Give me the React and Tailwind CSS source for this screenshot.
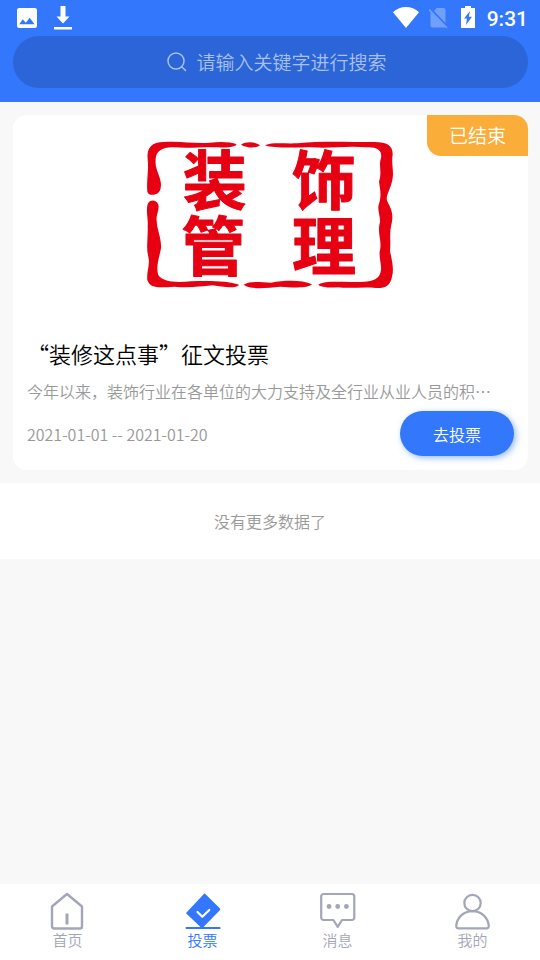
import React, { useState } from "react";

const polls = [
  {
    id: 1,
    title: "“装修这点事”征文投票",
    summary: "今年以来，装饰行业在各单位的大力支持及全行业从业人员的积…",
    start: "2021-01-01",
    end: "2021-01-20",
    status: "已结束",
  },
];

const tabs = [
  { key: "home", label: "首页", Icon: HomeIcon },
  { key: "vote", label: "投票", Icon: VoteIcon },
  { key: "message", label: "消息", Icon: MessageIcon },
  { key: "mine", label: "我的", Icon: UserIcon },
];

function HomeIcon() {
  return (
    <svg width="36" height="38" viewBox="0 0 36 38" fill="none" stroke="currentColor">
      <path
        d="M2 14.500 17 2l15 12.500V34.500a2 2 0 0 1-2 2H4a2 2 0 0 1-2-2Z"
        strokeWidth="2.400"
        strokeLinejoin="round"
      />
      <path d="M17 21.500v11" strokeWidth="3" />
    </svg>
  );
}

function VoteIcon() {
  return (
    <svg width="36" height="38" viewBox="0 0 36 38" fill="none">
      <path
        d="M19.800 1.600 35 16.500a1 1 0 0 1 0 1.400L18.500 35h-3L1.500 21.800a1 1 0 0 1 0-1.400L19.100 1.700a.5.5 0 0 1 .7-.1Z"
        fill="currentColor"
      />
      <path d="M1.500 36h33" stroke="currentColor" strokeWidth="2.200" strokeLinecap="round" />
      <path
        d="m12.500 20 4.800 4.800 7-6.800"
        stroke="white"
        strokeWidth="2.200"
        strokeLinecap="round"
        strokeLinejoin="round"
      />
    </svg>
  );
}

function MessageIcon() {
  return (
    <svg width="36" height="38" viewBox="0 0 36 38" fill="none">
      <path
        d="M3.500 2h28.500a2.300 2.300 0 0 1 2.300 2.300v21.400a2.300 2.300 0 0 1-2.300 2.300H22l-4.300 6.800-4.300-6.800H3.500a2.300 2.300 0 0 1-2.300-2.300V4.300A2.300 2.300 0 0 1 3.500 2Z"
        stroke="currentColor"
        strokeWidth="2.200"
        strokeLinejoin="round"
      />
      <g fill="currentColor">
        <circle cx="9" cy="14.500" r="2.400" />
        <circle cx="17.700" cy="14.500" r="2.400" />
        <circle cx="26.400" cy="14.500" r="2.400" />
      </g>
    </svg>
  );
}

function UserIcon() {
  return (
    <svg width="36" height="38" viewBox="0 0 36 38" fill="none" stroke="currentColor" strokeWidth="2.200">
      <circle cx="17.500" cy="11" r="8.200" />
      <path
        d="M17.500 19.200c9 0 15.500 6.300 16.300 14.800a2.200 2.200 0 0 1-2.200 2.300H3.400A2.200 2.200 0 0 1 1.200 34C2 25.500 8.500 19.200 17.500 19.200Z"
        strokeLinejoin="round"
      />
    </svg>
  );
}

function StatusBar() {
  return (
    <div className="flex h-9 items-center justify-between pr-3 pl-4 text-white">
      <div className="flex items-center gap-4">
        <svg width="22" height="24" viewBox="0 0 22 24">
          <path
            d="M3.200 2h15.600a2.200 2.200 0 0 1 2.200 2.200v15.600a2.200 2.200 0 0 1-2.200 2.200H3.200A2.200 2.200 0 0 1 1 19.800V4.200A2.200 2.200 0 0 1 3.200 2Zm3.500 11.200L3.300 18.300h15.200l-4.800-6.600-3.900 5Z"
            fill="currentColor"
            fillRule="evenodd"
          />
        </svg>
        <svg width="18" height="24" viewBox="0 0 18 24" fill="currentColor">
          <path d="M6.500 0h5v10.500h4L9 17.500l-6.500-7h4ZM0 21h18v2.500H0Z" />
        </svg>
      </div>
      <div className="flex items-center">
        <svg className="mr-2" width="28" height="24" viewBox="0 0 28 24" fill="currentColor">
          <path d="M0 6.300C7-.8 19-.8 26 6.300L13 22Z" />
        </svg>
        <svg className="mr-3" width="20" height="24" viewBox="0 0 20 24" fill="none">
          <g opacity=".3">
            <path d="M7.500 2H14.500a2 2 0 0 1 2 2v13L5 5ZM1.500 6l15 15a2 2 0 0 1-1.500.5H3.500a2 2 0 0 1-2-2Z" fill="currentColor" />
            <path d="M0 3.500 18 22" stroke="currentColor" strokeWidth="1.600" />
          </g>
        </svg>
        <svg className="mr-3" width="14" height="24" viewBox="0 0 14 24">
          <path
            d="M4 0h6v2h4v20H0V2h4ZM9 5l-6 7.500h3L5 19l6-8.200H7.800Z"
            fill="currentColor"
            fillRule="evenodd"
          />
        </svg>
        <span className="pt-px font-[Roboto] text-[21px] leading-6 font-medium">9:31</span>
      </div>
    </div>
  );
}

// Red seal used as the poll cover
function SealCover() {
  return (
    <svg width="280" height="170" viewBox="0 0 840 510" role="img" aria-label="装饰管理">
      <g fill="#e60012">
        <path d="M49 186C46 150 54 120 50 88C46 52 64 36 98 36C150 32 190 42 236 38C270 34 300 36 316 42C318 50 290 54 260 52C215 50 175 56 130 52C96 50 76 62 74 86C70 116 88 135 90 162C90 182 84 192 68 194C60 195 52 194 49 186Z" />
        <path d="M330 44C345 34 372 34 387 46C374 56 346 54 330 44Z" />
        <path d="M402 46C425 36 460 42 500 40C570 32 650 36 720 36C765 34 786 44 785 74C780 100 790 125 784 150C778 180 764 195 768 212C780 235 788 250 782 280C774 310 780 335 777 362C782 390 790 415 783 440C778 466 764 475 735 474C700 470 660 476 620 472C590 474 566 470 562 464C580 452 620 456 660 456C695 456 730 458 744 438C758 415 744 395 746 365C754 335 740 315 745 285C752 262 738 245 743 224C752 200 748 180 744 155C754 125 742 108 750 84C754 62 740 50 705 52C650 46 600 56 545 52C495 52 430 56 402 46Z" />
        <path d="M50 222C56 208 76 208 82 224C86 240 74 256 77 272C78 300 92 325 90 355C84 385 74 410 82 436C98 458 140 458 180 454C230 452 290 452 324 464C316 476 280 472 245 466C205 470 170 474 130 470C90 472 58 478 49 450C46 425 58 405 52 380C44 350 52 320 50 290C52 265 44 245 50 222Z" />
        <path d="M338 464C355 452 385 456 420 458C465 450 515 450 543 463C530 476 485 472 448 470C405 474 360 480 338 464Z" />
      </g>
      <text
        x="251 579 247 579"
        y="222 222 420 420"
        className="font-['Noto_Sans_CJK_SC',sans-serif] text-[192px] font-bold"
        fill="#e60012"
        stroke="#e60012"
        strokeWidth="3"
        strokeLinejoin="round"
        textAnchor="middle"
      >
        装饰管理
      </text>
    </svg>
  );
}

function PollCard({ poll }) {
  return (
    <article className="relative rounded-[14px] bg-white px-3.5 pb-3.5">
      <span className="absolute top-0 right-0 flex h-[41px] w-[101px] items-center justify-center rounded-tr-[14px] rounded-bl-[14px] bg-[#fbad3a] text-[19px] text-white">
        {poll.status}
      </span>
      <div className="flex justify-center pt-[15px]">
        <SealCover />
      </div>
      <h2 className="mt-[37px] text-[22px] leading-8">{poll.title}</h2>
      <p className="mt-2.5 truncate text-[16px] leading-6 text-[#999]">{poll.summary}</p>
      <div className="mt-2 flex items-center justify-between">
        <span className="text-[16px] leading-6 text-[#999]">
          {poll.start} -- {poll.end}
        </span>
        <button className="h-[45px] w-[114px] rounded-full bg-[#3277fc] text-[16px] text-white shadow-[2px_2px_6px_#3277fc80]">
          去投票
        </button>
      </div>
    </article>
  );
}

export default function App() {
  const [active, setActive] = useState("vote");
  const [keyword, setKeyword] = useState("");

  return (
    <div
      lang="zh-CN"
      className="flex min-h-screen flex-col bg-[#f8f8f8] font-['Noto_Sans_CJK_SC',sans-serif] font-[350] text-black"
    >
      <header className="bg-[#3277fc] pb-3.5">
        <StatusBar />
        <label className="mr-3 ml-[13px] flex h-13 items-center justify-center gap-2 rounded-full bg-[#2b65d8] pl-3 text-[#a9c0ef]">
          <svg width="22" height="22" viewBox="0 0 22 22" fill="none" stroke="currentColor" strokeWidth="1.500">
            <circle cx="10" cy="10" r="8" />
            <path d="m15.500 15.500 4 4" strokeLinecap="round" />
          </svg>
          <input
            type="text"
            aria-label="搜索"
            value={keyword}
            onChange={(e) => setKeyword(e.target.value)}
            placeholder="请输入关键字进行搜索"
            className="field-sizing-content bg-transparent text-[19px] leading-7 text-white outline-none placeholder:text-[#a9c0ef]"
          />
        </label>
      </header>

      <main className="flex-1">
        <div className="flex flex-col gap-3 py-[13px] pr-3 pl-[13px]">
          {polls.map((poll) => (
            <PollCard key={poll.id} poll={poll} />
          ))}
        </div>
        <p className="bg-white py-6 text-center text-[16px] leading-7 text-[#999]">没有更多数据了</p>
      </main>

      <nav className="sticky bottom-0 grid grid-cols-4 bg-white pt-2 pb-2.5">
        {tabs.map(({ key, label, Icon }) => (
          <button
            key={key}
            onClick={() => setActive(key)}
            className={`flex flex-col items-center text-[15px] leading-5 ${
              active === key ? "text-[#3277fc]" : "text-[#a3a6b8]"
            }`}
          >
            <Icon />
            {label}
          </button>
        ))}
      </nav>
    </div>
  );
}
